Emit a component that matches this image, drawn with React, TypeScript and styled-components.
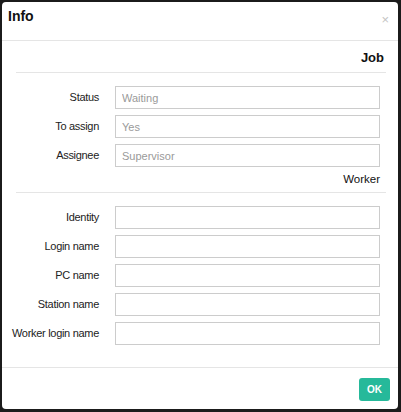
import React from 'react'
import styled, { createGlobalStyle } from 'styled-components'

const GlobalStyle = createGlobalStyle`
    html, body {
        margin: 0;
        padding: 0;
        background: #1b1b1b;
        font-family: "Liberation Sans", Arial, sans-serif;
    }
`

const jobFields = [
    { label: 'Status', value: 'Waiting' },
    { label: 'To assign', value: 'Yes' },
    { label: 'Assignee', value: 'Supervisor' },
]

const workerFields = ['Identity', 'Login name', 'PC name', 'Station name', 'Worker login name']

const App = () => {
    return <Screen>
        <GlobalStyle />
        <Modal>
            <Header>
                <Title>Info</Title>
                <Close>×</Close>
            </Header>
            <Body>
                <SectionTitle $bold>Job</SectionTitle>
                <Divider />
                <Fields>
                    {jobFields.map(f => (
                        <Row key={f.label}>
                            <Label>{f.label}</Label>
                            <Input readOnly placeholder={f.value} />
                        </Row>
                    ))}
                </Fields>
                <SectionTitle>Worker</SectionTitle>
                <Divider />
                <Fields>
                    {workerFields.map(label => (
                        <Row key={label}>
                            <Label>{label}</Label>
                            <Input readOnly />
                        </Row>
                    ))}
                </Fields>
            </Body>
            <Footer>
                <OkButton>OK</OkButton>
            </Footer>
        </Modal>
    </Screen>
}

export default App;


const Screen = styled.div`
    width: 401px;
    height: 412px;
    padding: 2px 3px 3px 2px;
    box-sizing: border-box;
    background: #1b1b1b;
`

const Modal = styled.div`
    background: #fff;
    border-radius: 4px;
    height: 100%;
    display: flex;
    flex-direction: column;
    color: #222;
`

const Header = styled.div`
    height: 38px;
    border-bottom: 1px solid #e5e5e5;
    display: flex;
    justify-content: space-between;
    padding: 0 9px 0 6px;
`

const Title = styled.div`
    font-size: 14px;
    font-weight: bold;
    margin-top: 6px;
    color: #111;
`

const Close = styled.div`
    font-size: 13px;
    color: #c4c4c4;
    margin-top: 10px;
`

const Body = styled.div`
    flex: 1;
    padding: 0 12px 0 14px;
    display: flex;
    flex-direction: column;
`

const SectionTitle = styled.div<{ $bold?: boolean }>`
    text-align: right;
    font-size: ${({ $bold }) => ($bold ? '13px' : '11.5px')};
    font-weight: ${({ $bold }) => ($bold ? 'bold' : 'normal')};
    padding-right: ${({ $bold }) => ($bold ? '2px' : '6px')};
    line-height: 14px;
    margin-top: ${({ $bold }) => ($bold ? '10px' : '5px')};
    margin-bottom: ${({ $bold }) => ($bold ? '7px' : '6px')};
    color: #111;
`

const Divider = styled.div`
    height: 1px;
    background: #e5e5e5;
`

const Fields = styled.div`
    display: flex;
    flex-direction: column;
    gap: 6px;
    padding: 13px 6px 0 0;
`

const Row = styled.div`
    display: flex;
    align-items: center;
    gap: 16px;
`

const Label = styled.label`
    flex: 0 0 83px;
    min-width: 0;
    display: flex;
    justify-content: flex-end;
    font-size: 11px;
    letter-spacing: -0.3px;
    color: #222;
    white-space: nowrap;
    margin-top: -2px;
`

const Input = styled.input`
    flex: 1;
    min-width: 0;
    height: 23px;
    box-sizing: border-box;
    border: 1px solid #ccc;
    padding: 0 6px;
    font-family: "Liberation Sans", Arial, sans-serif;
    font-size: 11px;
    outline: none;
    &::placeholder {
        color: #9a9a9a;
    }
`

const Footer = styled.div`
    border-top: 1px solid #e5e5e5;
    height: 42px;
    display: flex;
    justify-content: flex-end;
    align-items: flex-start;
    padding: 10px 8px 0 0;
    box-sizing: border-box;
`

const OkButton = styled.button`
    width: 31px;
    height: 23px;
    border: none;
    border-radius: 3px;
    background: #26b99a;
    color: #fff;
    font-family: "Liberation Sans", Arial, sans-serif;
    font-size: 10px;
    font-weight: bold;
    padding: 0;
    cursor: pointer;
`
